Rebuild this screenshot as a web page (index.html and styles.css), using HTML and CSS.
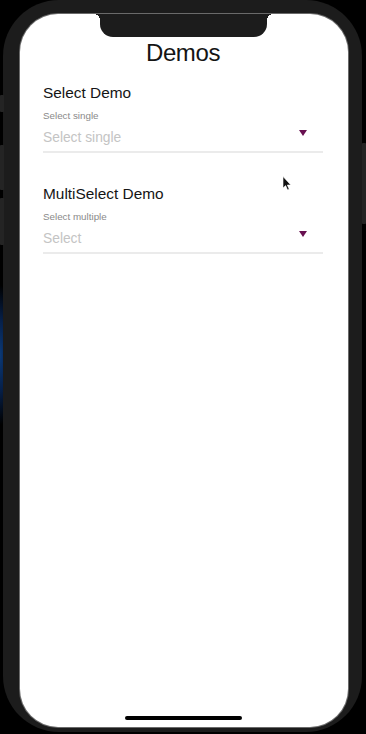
FILE: index.html
```html
<!DOCTYPE html>
<html>
<head>
<meta charset="utf-8">
<link rel="stylesheet" href="styles.css">
</head>
<body>
<div class="phone">
  <span class="btn btn-l1"></span>
  <span class="btn btn-l2"></span>
  <span class="btn btn-l3"></span>
  <span class="btn btn-r"></span>
  <div class="screen">
    <div class="notch"></div>
    <h1 class="title">Demos</h1>
    <section class="demo demo-first">
      <h2 class="demo-heading">Select Demo</h2>
      <div class="field-label">Select single</div>
      <div class="field">
        <span class="placeholder">Select single</span>
        <span class="caret"></span>
      </div>
    </section>
    <section class="demo">
      <h2 class="demo-heading">MultiSelect Demo</h2>
      <div class="field-label">Select multiple</div>
      <div class="field">
        <span class="placeholder">Select</span>
        <span class="caret"></span>
      </div>
    </section>
    <svg class="cursor" width="10" height="15" viewBox="0 0 10 15"><path d="M1 0.5 L1 12 L3.6 9.6 L5.6 14 L7.2 13.2 L5.3 9 L8.8 9 Z" fill="#111" stroke="#fff" stroke-width="0.6"/></svg>
    <div class="home-indicator"></div>
  </div>
</div>
</body>
</html>
```
FILE: styles.css
```css
html, body {
  margin: 0;
  padding: 0;
}
body {
  width: 366px;
  height: 734px;
  overflow: hidden;
  background: radial-gradient(ellipse 14px 70px at 0 355px, #0b3a78 0%, #06204a 50%, #000 100%) #000;
  font-family: "Liberation Sans", Arial, sans-serif;
}
.phone {
  position: relative;
  margin-left: 3px;
  width: 359px;
  height: 732px;
  background: #1c1c1c;
  border-radius: 56px;
  padding: 14px 14px 0 17px;
  box-sizing: border-box;
}
.btn {
  position: absolute;
  width: 4px;
  background: #242424;
  border-radius: 1px;
}
.btn-l1 { left: -3px; top: 95px; height: 17px; }
.btn-l2 { left: -3px; top: 145px; height: 45px; }
.btn-l3 { left: -3px; top: 198px; height: 47px; }
.btn-r { right: -4px; top: 143px; height: 81px; }
.screen {
  position: relative;
  height: 713px;
  background: #fff;
  border-radius: 38px;
  overflow: hidden;
  padding: 0 25px 0 23px;
  box-sizing: border-box;
  box-shadow: 0 0 0 1px #6a6a6a;
}
.notch {
  position: absolute;
  left: 80px;
  top: 0;
  width: 167px;
  height: 23px;
  background: #1c1c1c;
  border-radius: 0 0 13px 13px;
}
.notch::before,
.notch::after {
  content: "";
  position: absolute;
  top: 0;
  width: 6px;
  height: 6px;
}
.notch::before {
  left: -6px;
  background: radial-gradient(circle at 0 100%, transparent 6px, #1c1c1c 6px);
}
.notch::after {
  right: -6px;
  background: radial-gradient(circle at 100% 100%, transparent 6px, #1c1c1c 6px);
}
.title {
  margin: 0;
  padding-top: 25px;
  font-size: 24px;
  line-height: 28px;
  font-weight: normal;
  color: #141414;
  text-align: center;
  letter-spacing: -0.4px;
}
.demo {
  margin-top: 31px;
}
.demo-first {
  margin-top: 16px;
}
.demo-heading {
  margin: 0;
  font-size: 15.4px;
  line-height: 20px;
  font-weight: normal;
  color: #151515;
}
.field-label {
  margin-top: 7px;
  font-size: 9.8px;
  line-height: 12px;
  color: #8a8a8a;
}
.field {
  margin-top: 6px;
  height: 22px;
  padding-top: 1px;
  border-bottom: 2px solid #ebebeb;
  display: flex;
  justify-content: space-between;
  align-items: flex-start;
  padding-right: 16px;
}
.placeholder {
  font-size: 13.8px;
  line-height: 18px;
  color: #c4c4c4;
}
.caret {
  margin-top: 1px;
  width: 0;
  height: 0;
  border-left: 4px solid transparent;
  border-right: 4px solid transparent;
  border-top: 6px solid #681050;
}
.cursor {
  position: absolute;
  left: 262px;
  top: 162px;
}
.home-indicator {
  position: absolute;
  left: 105px;
  bottom: 7px;
  width: 117px;
  height: 4px;
  border-radius: 2px;
  background: #000;
}
```
